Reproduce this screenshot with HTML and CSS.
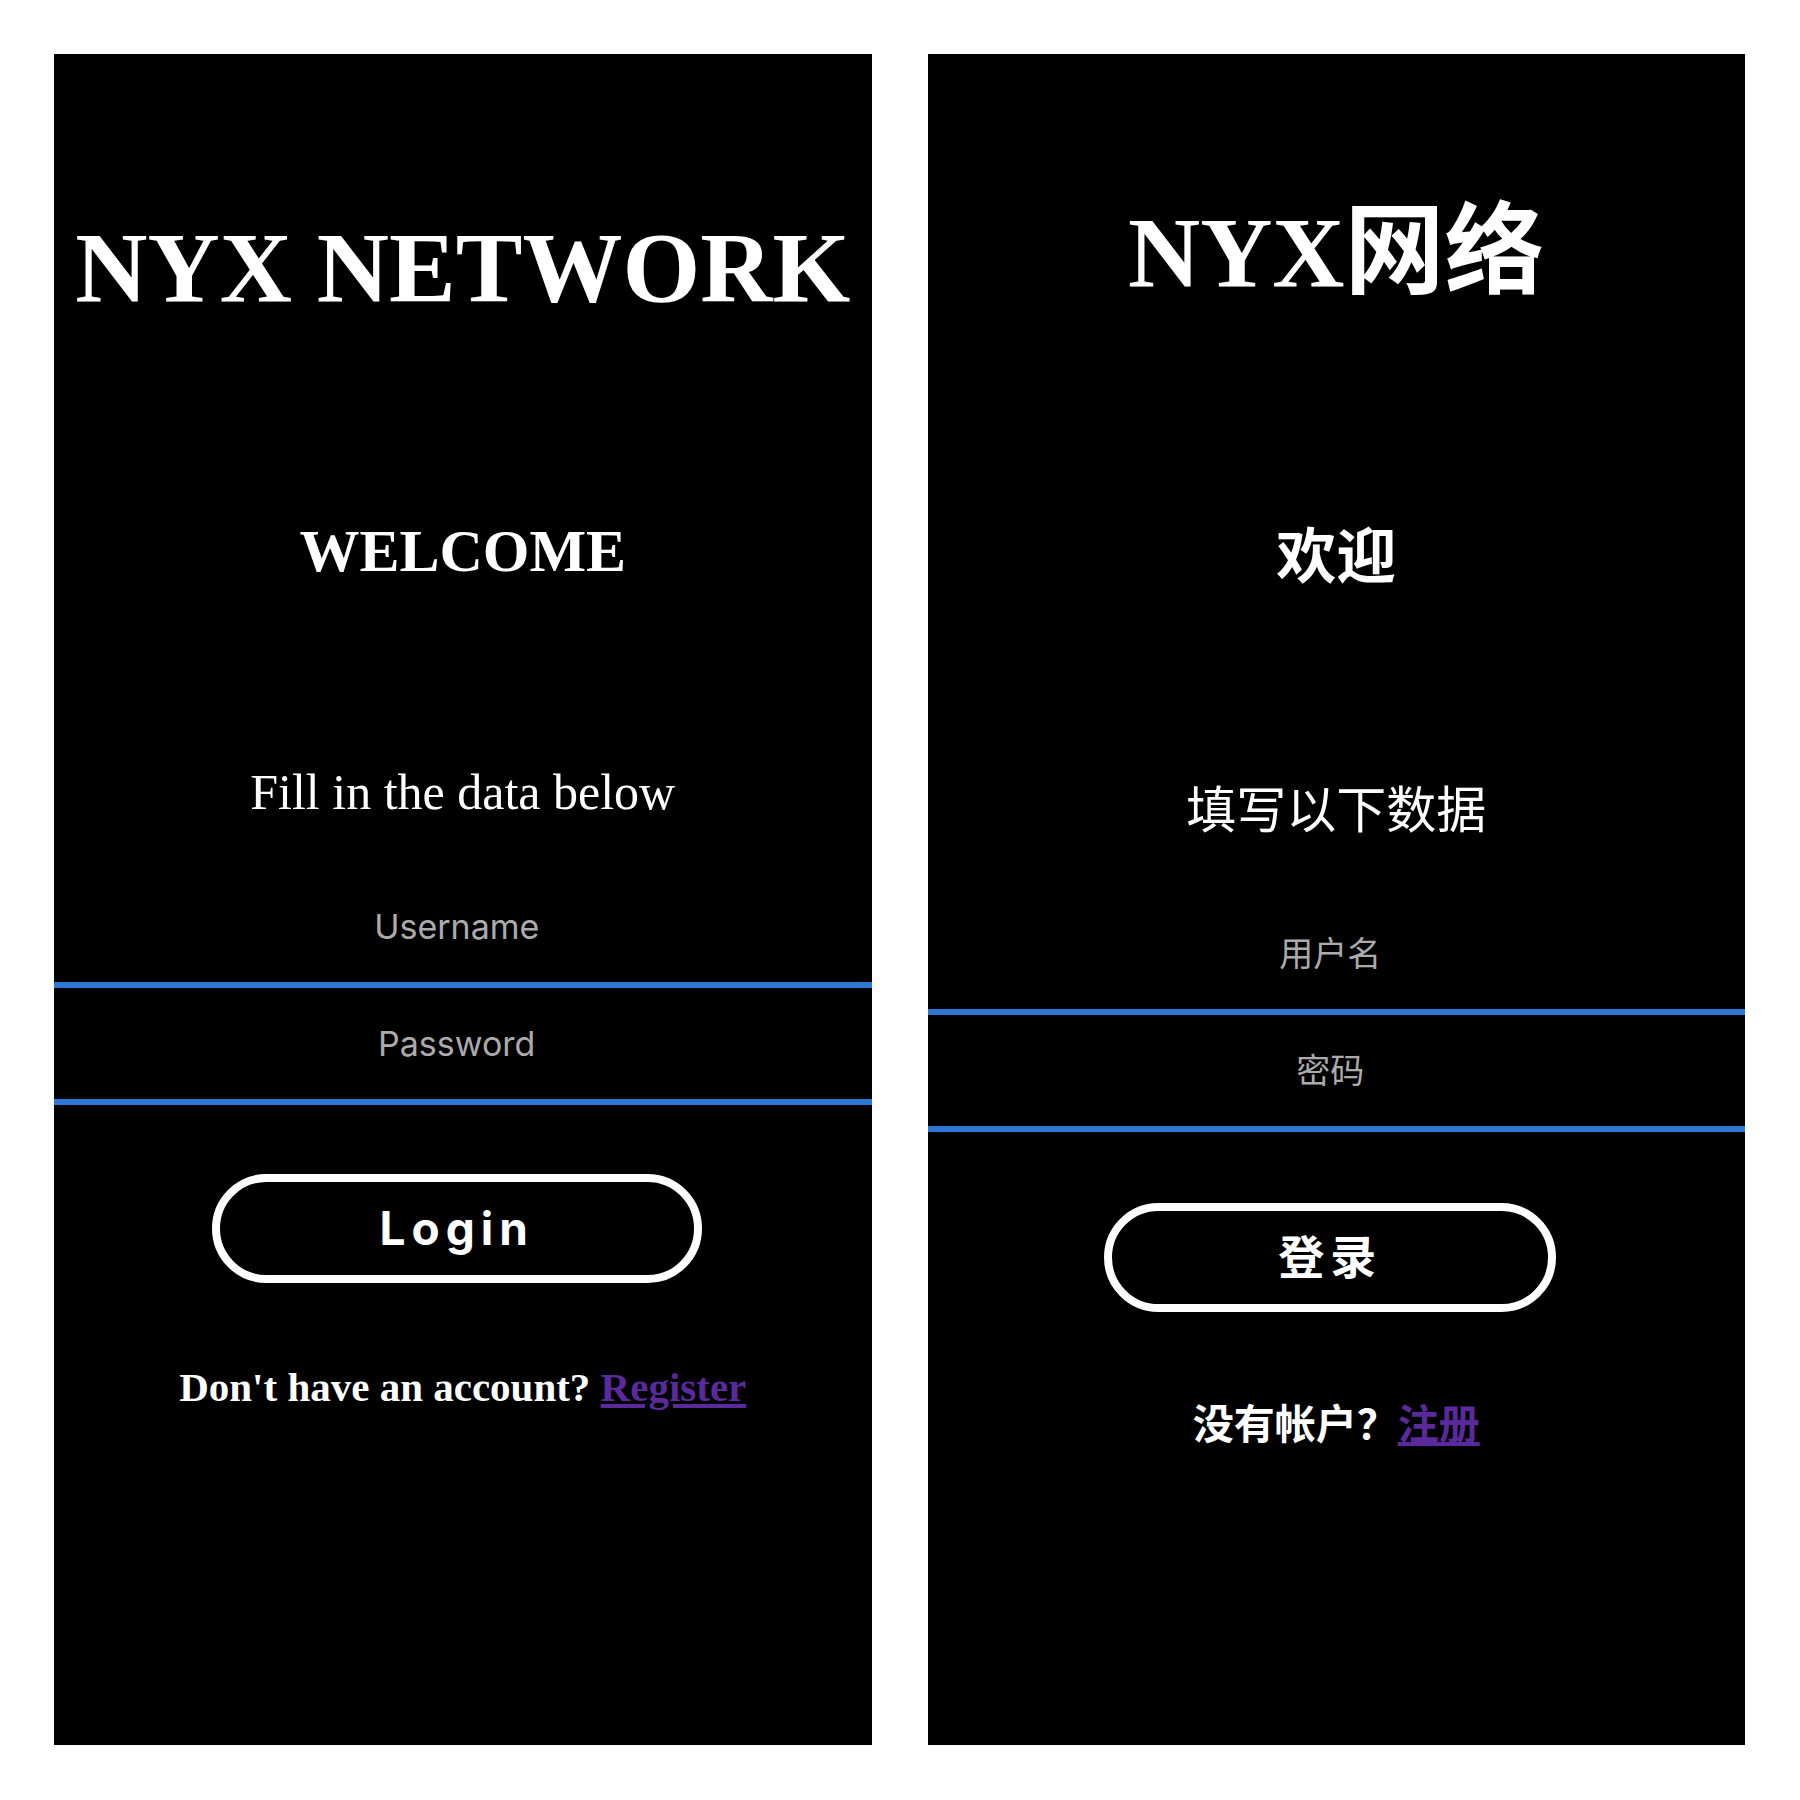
FILE: index.html
```html
<!DOCTYPE html>
<html lang="en">
<head>
<meta charset="utf-8">
<title>NYX NETWORK</title>
<link rel="stylesheet" href="styles.css">
</head>
<body>
<main class="screens">
  <section class="panel panel--en">
    <h1 class="title">NYX NETWORK</h1>
    <h2 class="welcome">WELCOME</h2>
    <p class="hint">Fill in the data below</p>
    <form class="fields">
      <input class="field" type="text" placeholder="Username">
      <input class="field" type="password" placeholder="Password">
    </form>
    <button class="login" type="button">Login</button>
    <p class="signup">Don't have an account? <a class="signup-link" href="#">Register</a></p>
  </section>
  <section class="panel panel--zh" lang="zh-CN">
    <h1 class="title">NYX网络</h1>
    <h2 class="welcome">欢迎</h2>
    <p class="hint">填写以下数据</p>
    <form class="fields">
      <input class="field" type="text" placeholder="用户名">
      <input class="field" type="password" placeholder="密码">
    </form>
    <button class="login" type="button">登录</button>
    <p class="signup">没有帐户？<a class="signup-link" href="#">注册</a></p>
  </section>
</main>
</body>
</html>
```
FILE: styles.css
```css
html, body {
  margin: 0;
  padding: 0;
  background: #ffffff;
}

.screens {
  display: flex;
  gap: 56px;
  padding: 54px 55px 55px 54px;
}

.panel {
  width: 818px;
  height: 1691px;
  background: #000000;
  color: #ffffff;
  display: flex;
  flex-direction: column;
  align-items: center;
  box-sizing: border-box;
  padding-top: var(--pad-top);
  font-family: "Liberation Serif", "Noto Sans CJK SC", serif;
}

.panel--en {
  --pad-top: 164px;
  --gap-welcome: 203px;
  --gap-hint: 186px;
  --gap-fields: 54px;
  --gap-button: 69px;
  --gap-signup: 84px;
  --btn-pad: 160px;
}

.panel--zh {
  --pad-top: 149px;
  --gap-welcome: 225px;
  --gap-hint: 198px;
  --gap-fields: 62px;
  --gap-button: 71px;
  --gap-signup: 93px;
  --btn-pad: 166px;
}

.title {
  margin: 0;
  font-size: 100px;
  line-height: 100px;
  font-weight: 700;
  white-space: nowrap;
}

.welcome {
  margin: var(--gap-welcome) 0 0;
  font-size: 60px;
  line-height: 60px;
  font-weight: 700;
}

.hint {
  margin: var(--gap-hint) 0 0;
  font-size: 50px;
  line-height: 50px;
  font-weight: 400;
}

.fields {
  margin: var(--gap-fields) 0 0;
  width: 100%;
  display: flex;
  flex-direction: column;
}

.field {
  display: block;
  width: 100%;
  height: 117px;
  box-sizing: border-box;
  margin: 0;
  padding: 0 12px 0 0;
  border: none;
  border-bottom: 6px solid #2d78d6;
  background: #000000;
  color: #ffffff;
  text-align: center;
  font-family: Inter, "Noto Sans CJK SC", sans-serif;
  font-size: 34px;
  outline: none;
}

.field::placeholder {
  color: #ababab;
}

.login {
  margin: var(--gap-button) 12px 0 0;
  height: 109px;
  padding: 0 var(--btn-pad);
  box-sizing: border-box;
  border: 8px solid #ffffff;
  border-radius: 60px;
  background: #000000;
  color: #ffffff;
  font-family: Inter, "Noto Sans CJK SC", sans-serif;
  font-size: 46px;
  font-weight: 700;
  letter-spacing: 6px;
  line-height: 93px;
}

.signup {
  margin: var(--gap-signup) 0 0;
  font-size: 41px;
  line-height: 41px;
  font-weight: 700;
  white-space: nowrap;
}

.signup-link {
  color: #5a2a9c;
  text-decoration: underline;
}
```
